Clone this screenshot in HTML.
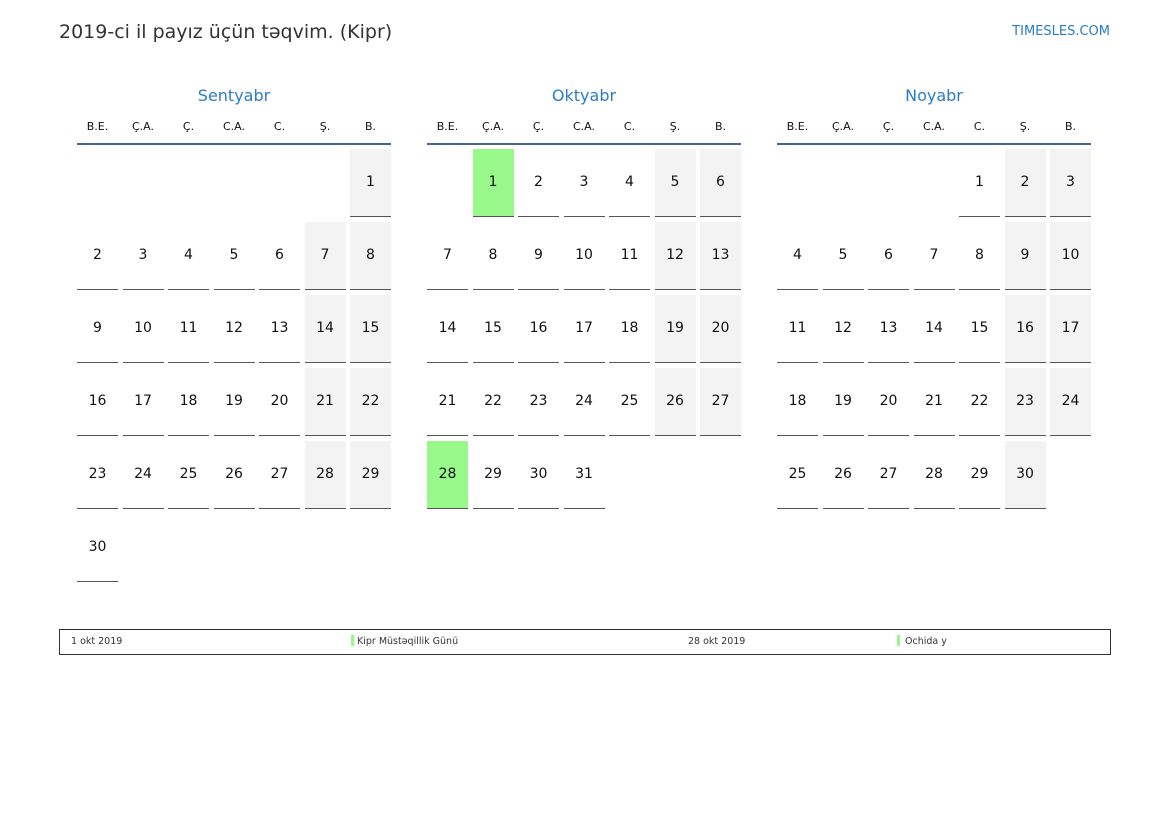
<!DOCTYPE html>
<html><head><meta charset="utf-8"><style>
*{margin:0;padding:0;box-sizing:border-box}
body{width:1169px;height:827px;background:#fff;font-family:"DejaVu Sans","Liberation Sans",sans-serif;position:relative;overflow:hidden;color:#111}
.title{position:absolute;left:59px;top:21px;font-size:19px;color:#333}
.site{position:absolute;right:59px;top:24px;font-size:13px;color:#2a7cc7}
.m{position:absolute;top:85px;width:314px}
.mn{text-align:center;font-size:16px;color:#2a7cc7;height:22px;line-height:22px}
.hd{display:grid;grid-template-columns:repeat(7,41px);column-gap:4.5px;margin-top:12px;font-size:11px;text-align:center;height:24px;line-height:16px}
.ln{height:2px;background:#47648e;margin-bottom:4px}
.g{display:grid;grid-template-columns:repeat(7,41px);column-gap:4.5px;row-gap:5px;grid-auto-rows:68px}
.g div{font-size:14px;text-align:center;line-height:67px}
.g div.d{border-bottom:1px solid #555}
.g div.w{background:#f3f3f3}
.g div.h{background:#98f98a}
.leg{position:absolute;left:59px;top:629px;width:1052px;height:26px;border:1px solid #333;font-size:9.5px;color:#333}
.leg span{position:absolute;top:6px}
.bar{position:absolute;top:5px;width:3px;height:11px;background:#98f98a}
</style></head><body>
<div class="title">2019-ci il payız üçün təqvim. (Kipr)</div>
<div class="site">TIMESLES.COM</div>

<div class="m" style="left:77px">
<div class="mn">Sentyabr</div>
<div class="hd"><span>B.E.</span><span>Ç.A.</span><span>Ç.</span><span>C.A.</span><span>C.</span><span>Ş.</span><span>B.</span></div>
<div class="ln"></div>
<div class="g">
<div></div><div></div><div></div><div></div><div></div><div></div><div class="d w">1</div>
<div class="d">2</div><div class="d">3</div><div class="d">4</div><div class="d">5</div><div class="d">6</div><div class="d w">7</div><div class="d w">8</div>
<div class="d">9</div><div class="d">10</div><div class="d">11</div><div class="d">12</div><div class="d">13</div><div class="d w">14</div><div class="d w">15</div>
<div class="d">16</div><div class="d">17</div><div class="d">18</div><div class="d">19</div><div class="d">20</div><div class="d w">21</div><div class="d w">22</div>
<div class="d">23</div><div class="d">24</div><div class="d">25</div><div class="d">26</div><div class="d">27</div><div class="d w">28</div><div class="d w">29</div>
<div class="d">30</div>
</div></div>

<div class="m" style="left:427px">
<div class="mn">Oktyabr</div>
<div class="hd"><span>B.E.</span><span>Ç.A.</span><span>Ç.</span><span>C.A.</span><span>C.</span><span>Ş.</span><span>B.</span></div>
<div class="ln"></div>
<div class="g">
<div></div><div class="d h">1</div><div class="d">2</div><div class="d">3</div><div class="d">4</div><div class="d w">5</div><div class="d w">6</div>
<div class="d">7</div><div class="d">8</div><div class="d">9</div><div class="d">10</div><div class="d">11</div><div class="d w">12</div><div class="d w">13</div>
<div class="d">14</div><div class="d">15</div><div class="d">16</div><div class="d">17</div><div class="d">18</div><div class="d w">19</div><div class="d w">20</div>
<div class="d">21</div><div class="d">22</div><div class="d">23</div><div class="d">24</div><div class="d">25</div><div class="d w">26</div><div class="d w">27</div>
<div class="d h">28</div><div class="d">29</div><div class="d">30</div><div class="d">31</div>
</div></div>

<div class="m" style="left:777px">
<div class="mn">Noyabr</div>
<div class="hd"><span>B.E.</span><span>Ç.A.</span><span>Ç.</span><span>C.A.</span><span>C.</span><span>Ş.</span><span>B.</span></div>
<div class="ln"></div>
<div class="g">
<div></div><div></div><div></div><div></div><div class="d">1</div><div class="d w">2</div><div class="d w">3</div>
<div class="d">4</div><div class="d">5</div><div class="d">6</div><div class="d">7</div><div class="d">8</div><div class="d w">9</div><div class="d w">10</div>
<div class="d">11</div><div class="d">12</div><div class="d">13</div><div class="d">14</div><div class="d">15</div><div class="d w">16</div><div class="d w">17</div>
<div class="d">18</div><div class="d">19</div><div class="d">20</div><div class="d">21</div><div class="d">22</div><div class="d w">23</div><div class="d w">24</div>
<div class="d">25</div><div class="d">26</div><div class="d">27</div><div class="d">28</div><div class="d">29</div><div class="d w">30</div>
</div></div>

<div class="leg">
<span style="left:11px">1 okt 2019</span>
<div class="bar" style="left:291px"></div><span style="left:297px">Kipr Müstəqillik Günü</span>
<span style="left:628px">28 okt 2019</span>
<div class="bar" style="left:837px"></div><span style="left:845px">Ochida y</span>
</div>
</body></html>
